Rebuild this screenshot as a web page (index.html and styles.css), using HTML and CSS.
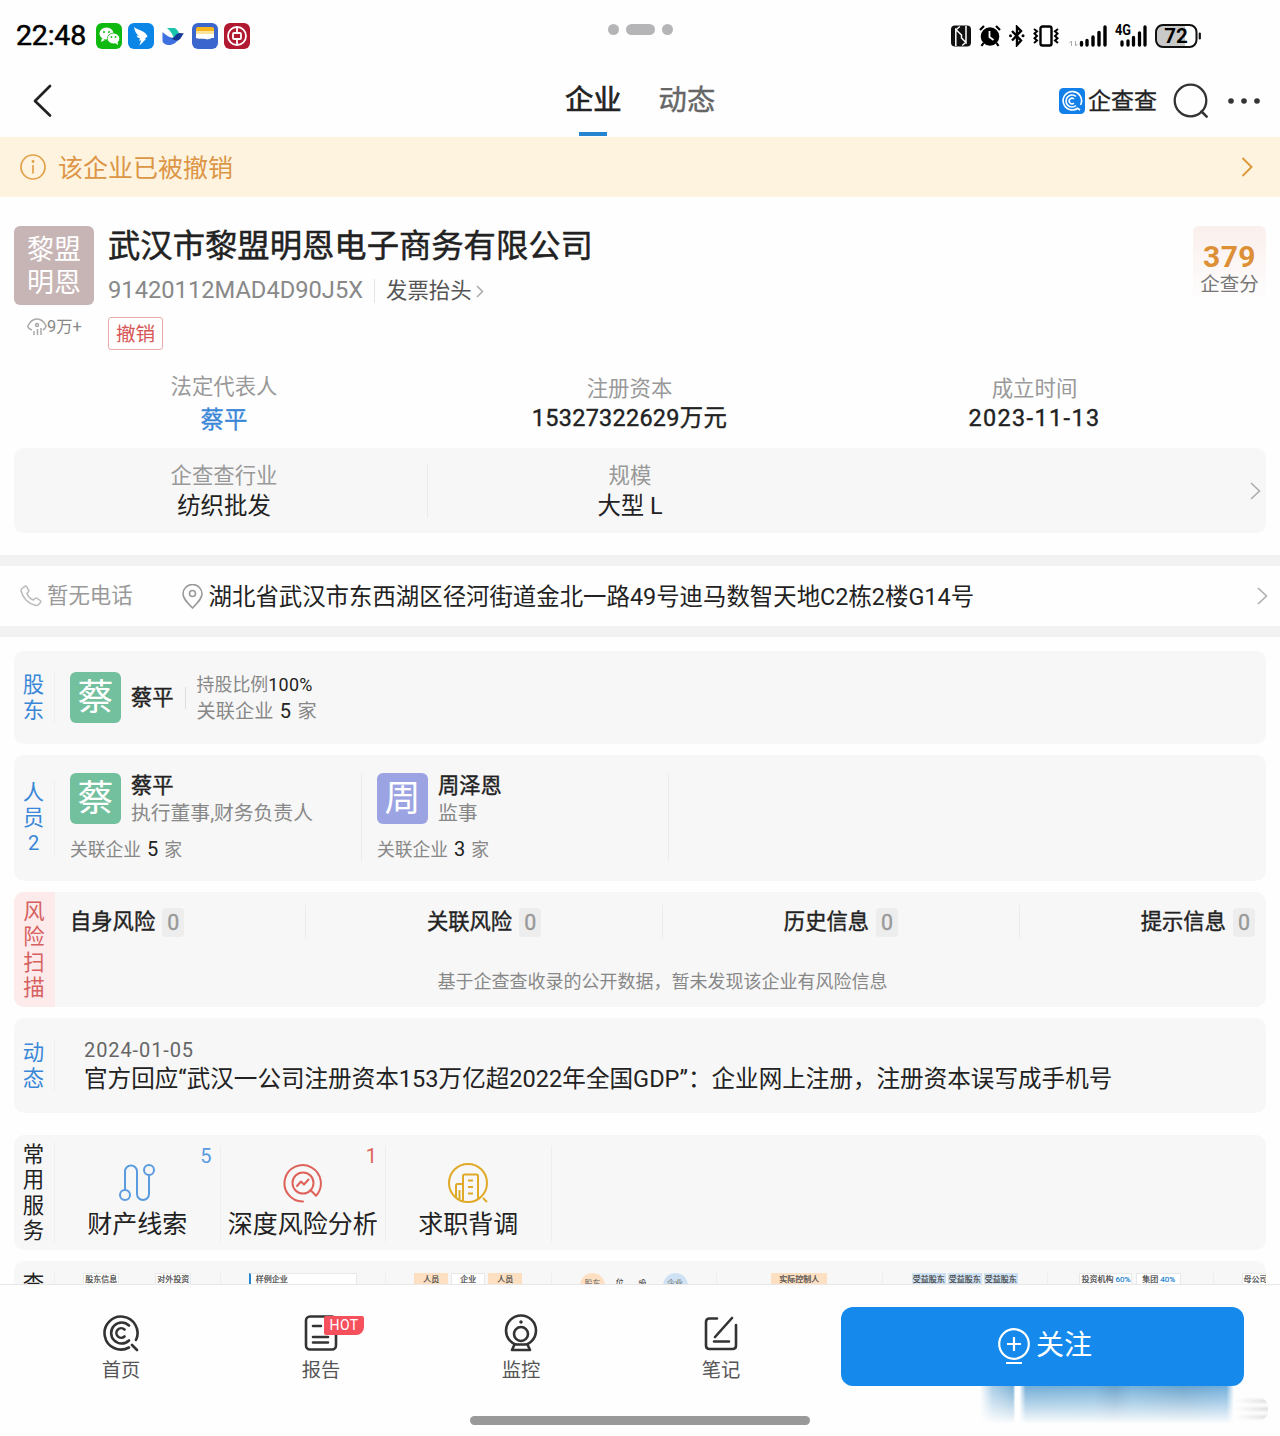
FILE: index.html
```html
<!DOCTYPE html>
<html lang="zh-CN">
<head>
  <meta charset="UTF-8" />
  <title>企查查 - 武汉市黎盟明恩电子商务有限公司</title>
  <link rel="stylesheet" href="styles.css">
</head>
<body>
  <div class="statusbar">
    <div class="status-left">
      <span class="time">22:48</span>
      <svg class="app-icon" viewBox="0 0 26 26"><rect width="26" height="26" rx="6" fill="#0fb90f"/><ellipse cx="10.500" cy="10.500" rx="7" ry="6" fill="#fff"/><path d="M6 15l-1 4 4-2z" fill="#fff"/><ellipse cx="17.500" cy="15.500" rx="6.200" ry="5.400" fill="#fff" stroke="#0fb90f" stroke-width=".8"/><path d="M19 20l3 2-.5-4z" fill="#fff"/><g fill="#0fb90f"><circle cx="8" cy="9" r="1"/><circle cx="13" cy="9" r="1"/><circle cx="15.500" cy="14" r=".9"/><circle cx="19.500" cy="14" r=".9"/></g></svg>
      <svg class="app-icon" viewBox="0 0 26 26"><rect width="26" height="26" rx="6" fill="#0b86e6"/><path d="M6 4c3 3 12 4 13.500 9.500L16.500 16h1.500l-6.500 6.500 1.500-5h-2l1.200-2c-2-.5-3.200-1.500-3.700-3l2.500.3C8 11 6.500 7.500 6 4z" fill="#fff"/></svg>
      <svg class="app-icon" viewBox="0 0 26 26"><path d="M7 5h8c2.500 2 4 4 4 6l-5 5c-1-4-3-8-7-11z" fill="#19c6ad"/><path d="M2.500 9C7 13 11 16 19 14.500 17 20 13 22 9 22c-3 0-6-1.500-6.500-4z" fill="#3f70e0"/><path d="M11.500 15.500c3.500-.5 4-5.500 8.500-5.500l4 .6c-2.500 2-2.500 5.500-6 7-2.500 0-4.500-.6-6.500-2.100z" fill="#143a95"/></svg>
      <svg class="app-icon" viewBox="0 0 26 26"><rect width="26" height="26" rx="6" fill="#3a66cd"/><path d="M4 6q0-2 2-2h14q2 0 2 2v6H4z" fill="#f9b51d"/><path d="M4 8h18v7c-3-1-4 2-8 1-4-1-6 0-10-1z" fill="#fde39a"/><path d="M4 11h18v4c-3-1-4 2-8 1-4-1-6 0-10-1z" fill="#fff"/></svg>
      <svg class="app-icon" viewBox="0 0 26 26"><rect width="26" height="26" rx="6" fill="#b01930"/><g fill="none" stroke="#fff" stroke-width="1.800"><circle cx="13" cy="13" r="9"/><rect x="9" y="10" width="8" height="6" rx="1"/><path d="M13 4v6M13 16v6"/></g></svg>
    </div>
    <div class="window-dots"><i></i><i class="pill"></i><i></i></div>
    <div class="status-right">
      <svg width="20" height="22" viewBox="0 0 20 22"><rect y=".5" width="20" height="21" rx="4" fill="#111"/><path d="M4.800 21V4.500l5.700 5.500v3l4.500 4.500V1M4.800 5l4-3.500M15.200 17l-4 3.500" fill="none" stroke="#fff" stroke-width="1.500"/></svg>
      <svg width="22" height="22" viewBox="0 0 22 22"><circle cx="11" cy="11.500" r="9.300" fill="#000"/><path d="M1 5l4-4M21 5l-4-4M4.500 18l-2 3M17.500 18l2 3" stroke="#000" stroke-width="2.200"/><path d="M10.500 6v6l4 3" fill="none" stroke="#fff" stroke-width="1.800"/></svg>
      <svg width="16" height="22" viewBox="0 0 16 22"><path d="M3 6l9 9.500L8 20V2l4 4-9 9.500" fill="none" stroke="#000" stroke-width="2.400"/><circle cx="1.500" cy="10.800" r="1.500"/><circle cx="14" cy="10.800" r="1.500"/></svg>
      <svg width="26" height="22" viewBox="0 0 26 22"><rect x="7.500" y="1.500" width="11" height="19" rx="2" fill="none" stroke="#000" stroke-width="2.400"/><path d="M1 4l3 2.300-2.500 2.300L4 11l-2.500 2.300L4 15.500 1 18M25 4l-3 2.300 2.500 2.300L22 11l2.500 2.300-2.500 2.200L25 18" fill="none" stroke="#000" stroke-width="2"/></svg>
      <svg class="signal" width="38" height="22" viewBox="0 0 38 22"><path d="M2.500 21v-5l-2 2M6.500 16v5l2-2" fill="none" stroke="#aaa"/><path d="M12.500 17.500v2.500M18 15.500v4.500M24 12v8M30 7.500v12.500M36 2v18" stroke="#000" stroke-width="3.400" stroke-linecap="round"/></svg>
      <svg width="32" height="24" viewBox="0 0 32 24"><text class="net" x="0" y="11" textLength="16" lengthAdjust="spacingAndGlyphs">4G</text><path d="M7 18v3M13 17v4M18.500 13.500v7.500M24.500 9v12M30 3v18" stroke="#000" stroke-width="3.300" stroke-linecap="round"/></svg>
      <svg width="47" height="24" viewBox="0 0 47 24"><rect x="1" y="1" width="40.500" height="22" rx="7" fill="#fff"/><path d="M8 1h22v22H8a7 7 0 0 1-7-7V8a7 7 0 0 1 7-7z" fill="#c9c9c9"/><rect x="1" y="1" width="40.500" height="22" rx="7" fill="none" stroke="#111" stroke-width="2"/><path d="M44.800 9.500v5" stroke="#111" stroke-width="2.200" stroke-linecap="round"/><text class="battery" x="21" y="19">72</text></svg>
    </div>
  </div>

  <div class="navbar">
    <svg class="back" width="20" height="34" viewBox="0 0 20 34"><path d="M18 2L3 17l15 14.500" fill="none" stroke="#222" stroke-width="2.700" stroke-linecap="round" stroke-linejoin="round"/></svg>
    <div class="tabs">
      <a class="tab active">企业</a>
      <a class="tab">动态</a>
    </div>
    <div class="nav-right">
      <svg width="26" height="26" viewBox="0 0 26 26"><rect width="26" height="26" rx="4.500" fill="#1280e8"/><g fill="none" stroke="#fff" stroke-width="1.600"><path d="M19 20a9.200 9.200 0 1 1 2.500-3M18 20l3 2"/><path d="M17 8.500a6 6 0 1 0 0 9"/><path d="M15 11a2.800 2.800 0 1 0 0 4"/></g></svg>
      <span class="brand">企查查</span>
      <svg class="search" width="36" height="36" viewBox="0 0 36 36"><circle cx="17.500" cy="17.500" r="15.800" fill="none" stroke="#333" stroke-width="2.300"/><path d="M28.500 28.500l5.200 5.200" stroke="#333" stroke-width="2.500" stroke-linecap="round"/></svg>
      <svg width="32" height="6" viewBox="0 0 32 6" fill="#333"><circle cx="3" cy="3" r="2.800"/><circle cx="16" cy="3" r="2.800"/><circle cx="29" cy="3" r="2.800"/></svg>
    </div>
  </div>

  <div class="notice">
    <svg width="26" height="26" viewBox="0 0 26 26"><circle cx="13" cy="13" r="12" fill="none" stroke="#e2a048" stroke-width="1.700"/><circle cx="13" cy="7.500" r="1.400" fill="#e2a048"/><path d="M13 11v8.500" stroke="#e2a048" stroke-width="1.700"/></svg>
    <span class="notice-text">该企业已被撤销</span>
    <svg width="12" height="20" viewBox="0 0 12 20"><path d="M1.500 1l9 9-9 9" fill="none" stroke="#dd9838" stroke-width="1.900"/></svg>
  </div>

  <main>
    <section class="company">
      <div class="logo-col">
        <div class="company-logo">黎盟<br>明恩</div>
        <div class="views">
          <svg width="20" height="18" viewBox="0 0 20 18" fill="none" stroke="#aaa" stroke-width="1.500"><path d="M5 12C2 11 .8 9 .8 8 3 3.500 6 1 10 1s7 2.500 9.200 7c-.5 1.500-1.500 3-3.200 4M7 13v4M10.500 11v6M14 10v7"/><circle cx="10" cy="7" r="1.500"/></svg>
          <span>9万+</span>
        </div>
      </div>
      <div class="company-info">
        <h1>武汉市黎盟明恩电子商务有限公司</h1>
        <div class="code-row">
          <span class="code">91420112MAD4D90J5X</span>
          <span class="invoice">发票抬头</span>
          <svg width="8" height="13" viewBox="0 0 8 13"><path d="M1 1l5.500 5.500L1 12" fill="none" stroke="#aaa" stroke-width="1.500"/></svg>
        </div>
        <span class="tag">撤销</span>
      </div>
      <div class="score"><b>379</b><span>企查分</span></div>
    </section>

    <section class="facts">
      <div class="fact first"><span>法定代表人</span><a>蔡平</a></div>
      <div class="fact"><span>注册资本</span><strong>15327322629万元</strong></div>
      <div class="fact"><span>成立时间</span><strong class="date">2023-11-13</strong></div>
    </section>

    <section class="industry">
      <div class="fact"><span>企查查行业</span><p>纺织批发</p></div>
      <div class="fact line"><span>规模</span><p>大型 L</p></div>
      <svg class="chevron" width="11" height="18" viewBox="0 0 11 18"><path d="M1 1l8.500 8L1 17" fill="none" stroke="#aaa" stroke-width="1.500"/></svg>
    </section>

    <section class="contact">
      <svg width="22" height="22" viewBox="0 0 22 22"><path d="M2 3.500L5 1.200q1-.5 1.700.5l2 3.600q.3 1-.5 1.700L7 8.500c1 3 3.500 5.500 6.500 6.500l1.500-1.500q.8-.8 1.700-.3l3.600 2.300q1 .7.300 1.700l-2.300 2.600q-1 1-3 .5C8 18.500 2.500 12.500 1.200 6q-.3-1.500.8-2.500z" fill="none" stroke="#bbb" stroke-width="1.500"/></svg>
      <span class="phone">暂无电话</span>
      <svg width="21" height="25" viewBox="0 0 21 25" fill="none" stroke="#999" stroke-width="1.600"><path d="M10.500 24C4 17.500 1 14 1 10a9.500 9.500 0 0 1 19 0c0 4-3 7.500-9.500 14z"/><circle cx="10.500" cy="9.500" r="3"/></svg>
      <span class="address">湖北省武汉市东西湖区径河街道金北一路49号迪马数智天地C2栋2楼G14号</span>
      <svg width="11" height="18" viewBox="0 0 11 18"><path d="M1 1l8.500 8L1 17" fill="none" stroke="#aaa" stroke-width="1.500"/></svg>
    </section>

    <section class="card holders">
      <div class="side">股<br>东</div>
      <div class="avatar green">蔡</div>
      <strong class="holder-name">蔡平</strong>
      <div class="holder-detail">
        <p>持股比例<em>100%</em></p>
        <p class="related">关联企业 <em>5</em> 家</p>
      </div>
    </section>

    <section class="card people">
      <div class="side">人<br>员<br><small>2</small></div>
      <div class="person">
        <div class="person-top">
          <div class="avatar green">蔡</div>
          <div><strong>蔡平</strong><span>执行董事,财务负责人</span></div>
        </div>
        <p>关联企业 <em>5</em> 家</p>
      </div>
      <div class="person">
        <div class="person-top">
          <div class="avatar purple">周</div>
          <div><strong>周泽恩</strong><span>监事</span></div>
        </div>
        <p>关联企业 <em>3</em> 家</p>
      </div>
    </section>

    <section class="card risk">
      <div class="side">风<br>险<br>扫<br>描</div>
      <div class="risk-body">
        <div class="risk-row">
          <div class="risk-item">自身风险<b>0</b></div>
          <i></i>
          <div class="risk-item">关联风险<b>0</b></div>
          <i></i>
          <div class="risk-item">历史信息<b>0</b></div>
          <i></i>
          <div class="risk-item">提示信息<b>0</b></div>
        </div>
        <p>基于企查查收录的公开数据，暂未发现该企业有风险信息</p>
      </div>
    </section>

    <section class="card news">
      <div class="side">动<br>态</div>
      <div class="news-body">
        <time>2024-01-05</time>
        <p>官方回应“武汉一公司注册资本153万亿超2022年全国GDP”：企业网上注册，注册资本误写成手机号</p>
      </div>
    </section>

    <section class="card services">
      <div class="side dark">常<br>用<br>服<br>务</div>
      <div class="service">
        <span class="count blue">5</span>
        <svg width="42" height="42" viewBox="0 0 42 42" fill="none" stroke="#5a9be0" stroke-width="2"><circle cx="9" cy="33" r="5"/><circle cx="33" cy="8" r="5"/><path d="M9 28V9.500a6 6 0 0 1 12 0V32a6 6 0 0 0 12 0V13"/></svg>
        <span>财产线索</span>
      </div>
      <div class="service">
        <span class="count red">1</span>
        <svg width="42" height="42" viewBox="0 0 42 42" fill="none" stroke="#de6259" stroke-width="2" stroke-linecap="round" stroke-linejoin="round"><path d="M21 39.500a18.200 18.200 0 1 1 13-5.800L28.500 28"/><circle cx="21" cy="21" r="10.500"/><path d="M15 24l4-4.500 3 3 4.500-5"/></svg>
        <span>深度风险分析</span>
      </div>
      <div class="service">
        <svg width="42" height="42" viewBox="0 0 42 42" fill="none" stroke="#e0aa28" stroke-width="2" stroke-linejoin="round"><circle cx="21" cy="21" r="19"/><path d="M16 39V14q0-1.500 1.500-1.500h12q1.500 0 1.500 1.500v23M9 35V23.500q0-1.500 1.500-1.500H16M21 18.500h5M21 25h5M21 31.500h5M12.500 28v9M36 36l4 4"/></svg>
        <span>求职背调</span>
      </div>
    </section>

    <section class="card charts">
      <div class="side dark">查</div>
      <div class="chart gap-wide"><span class="node">股东信息</span><span class="node">对外投资</span></div>
      <div class="chart"><span class="node example">样例企业</span></div>
      <div class="chart"><span class="node orange">人员</span><span class="node wide">企业</span><span class="node orange">人员</span></div>
      <div class="chart circles"><span class="ball peach">股东</span><span class="tilt">位...</span><span class="tilt left">...股</span><span class="ball sky">企业</span></div>
      <div class="chart"><span class="node orange controller">实际控制人</span></div>
      <div class="chart tight"><span class="node sky">受益股东</span><span class="node sky">受益股东</span><span class="node sky">受益股东</span></div>
      <div class="chart"><span class="node">投资机构 <em>60%</em></span><span class="node pad">集团 <em>40%</em></span></div>
      <div class="chart last"><span class="node">母公司</span></div>
    </section>
  </main>

  <footer>
    <a class="foot-item">
      <svg width="38" height="38" viewBox="0 0 38 38" fill="none" stroke="#333" stroke-width="2.600" stroke-linecap="round"><path d="M27 33.500a16.500 16.500 0 1 1 7-7.500M30 31l5 5"/><path d="M27 11.500a10.500 10.500 0 1 0 0 15"/><path d="M22.500 15.500a4.800 4.800 0 1 0 0 7"/></svg>
      <span>首页</span>
    </a>
    <a class="foot-item">
      <svg width="38" height="38" viewBox="0 0 38 38" fill="none" stroke="#333" stroke-width="2.600" stroke-linecap="round"><rect x="4" y="2.500" width="30" height="33" rx="4"/><path d="M11 12h8M11 23h15M11 28.500h15"/></svg>
      <b class="hot">HOT</b>
      <span>报告</span>
    </a>
    <a class="foot-item">
      <svg width="38" height="38" viewBox="0 0 38 38" fill="none" stroke="#333" stroke-width="2.600" stroke-linejoin="round"><circle cx="19" cy="16.500" r="15"/><circle cx="19" cy="20" r="7"/><circle cx="19" cy="8" r="1" fill="#333" stroke-width="1.500"/><path d="M12.500 30.500L10 36h18l-2.500-5.500z" fill="#fff"/></svg>
      <span>监控</span>
    </a>
    <a class="foot-item">
      <svg width="38" height="38" viewBox="0 0 38 38" fill="none" stroke="#333" stroke-width="2.600" stroke-linecap="round"><path d="M15 4.500H7.500Q4 4.500 4 8v23.500Q4 35 7.500 35h23q3.500 0 3.500-3.500V11M30 4L13 23M12 27.500h15"/></svg>
      <span>笔记</span>
    </a>
    <button class="follow-btn">
      <svg width="34" height="38" viewBox="0 0 34 38" fill="none" stroke="#fff" stroke-width="2.200"><circle cx="17" cy="17" r="14.800"/><path d="M17 10v14M10 17h14M9 36h16"/></svg>
      <span>关注</span>
    </button>
    <div class="smear"></div>
    <div class="smear-end"></div>
    <div class="home-bar"></div>
  </footer>
</body>
</html>
```
FILE: styles.css
```css
* {
    box-sizing: border-box;
}

body {
    margin: 0;
    width: 1280px;
    height: 1436px;
    overflow: hidden;
    display: flex;
    flex-direction: column;
    background-color: #fefefe;
    color: #222;
    font-family: Roboto, "Noto Sans CJK SC", sans-serif;
    line-height: 1;
    white-space: nowrap;
}

p, h1 {
    margin: 0;
    font-weight: normal;
}

em {
    font-style: normal;
    color: #222;
}

svg {
    display: block;
    flex-shrink: 0;
}

strong {
    font-weight: normal;
    -webkit-text-stroke: 0.4px currentColor;
}

/* status bar */
.statusbar {
    display: grid;
    grid-template-columns: 596px 1fr 596px;
    height: 72px;
    flex-shrink: 0;
    padding-top: 22px;
}

.status-left {
    display: flex;
    align-items: center;
    height: 28px;
    padding-left: 16px;
}

.time {
    width: 80px;
    padding-top: 1px;
    font-size: 28.500px;
    letter-spacing: -0.200px;
    color: #000;
    -webkit-text-stroke: 0.5px currentColor;
}

.app-icon {
    width: 26px;
    height: 26px;
    margin-right: 6px;
}

.window-dots {
    display: flex;
    align-items: center;
    justify-content: center;
    gap: 7px;
    height: 14px;
}

.window-dots i {
    width: 11px;
    height: 11px;
    border-radius: 6px;
    background-color: #b5b5b8;
}

.window-dots .pill {
    width: 29px;
}

.status-right {
    display: flex;
    align-items: center;
    justify-content: flex-end;
    gap: 8px;
    height: 28px;
    padding-right: 78px;
}

.signal {
    margin-left: 2px;
}

.net {
    font-size: 14px;
    font-weight: bold;
}

.battery {
    font-size: 20.500px;
    font-weight: bold;
    text-anchor: middle;
}

/* nav */
.navbar {
    display: grid;
    grid-template-columns: 540px 200px 540px;
    height: 64.500px;
    flex-shrink: 0;
}

.back {
    margin: 12px 0 0 32px;
}

.tabs {
    display: flex;
    gap: 37px;
    padding-left: 25px;
}

.tab {
    height: 64px;
    padding-top: 15px;
    font-size: 28.300px;
    color: #666;
    -webkit-text-stroke: 0.4px currentColor;
}

.tab.active {
    color: #222;
    -webkit-text-stroke: 0.7px currentColor;
}

.tab.active::after {
    content: "";
    display: block;
    width: 28px;
    height: 4px;
    margin: 17px auto 0;
    background-color: #2585d0;
}

.nav-right {
    display: flex;
    align-items: center;
    justify-content: flex-end;
    height: 57px;
    padding-right: 20px;
}

.brand {
    margin: 1px 16px 0 3px;
    font-size: 23px;
    -webkit-text-stroke: 0.3px currentColor;
}

.search {
    margin-right: 19px;
}

/* notice */
.notice {
    display: flex;
    align-items: center;
    height: 60.500px;
    flex-shrink: 0;
    padding: 0 27px 0 20px;
    background-color: #fef3df;
}

.notice-text {
    flex: 1;
    margin: 3px 0 0 12px;
    font-size: 25px;
    color: #dc9646;
}

main {
    height: 1087px;
    overflow: hidden;
    padding-top: 29px;
}

/* company header */
.company {
    display: flex;
    height: 133px;
    padding: 0 14px;
}

.logo-col {
    width: 80px;
    margin-right: 14px;
}

.company-logo {
    height: 79px;
    padding-top: 8px;
    border-radius: 6px;
    background-color: #c7b5b5;
    color: #fff;
    text-align: center;
    font-size: 27px;
    line-height: 33px;
}

.views {
    display: flex;
    align-items: center;
    margin: 13px 0 0 13px;
    color: #888;
    font-size: 16.400px;
}

.company-info {
    flex: 1;
}

.company-info h1 {
    padding-top: 1px;
    font-size: 32.350px;
    line-height: 38px;
    -webkit-text-stroke: 0.5px currentColor;
}

.code-row {
    display: flex;
    align-items: center;
    height: 26px;
    margin-top: 13px;
    margin-bottom: 13px;
}

.code {
    width: 267px;
    margin-right: 11px;
    border-right: 1px solid #e5e5e5;
    font-size: 23.700px;
    color: #888;
}

.invoice {
    margin-right: 4px;
    font-size: 21.400px;
    color: #555;
}

.tag {
    display: inline-block;
    height: 33px;
    padding: 7px 7px 5px;
    border: 1px solid #ecaaaa;
    border-radius: 3px;
    font-size: 19.600px;
    color: #d75656;
}

.score {
    display: flex;
    flex-direction: column;
    align-items: center;
    width: 73px;
    height: 75px;
    padding-top: 16px;
    border-radius: 6px;
    background: linear-gradient(#faefec, #fefefe);
}

.score b {
    font-size: 30px;
    color: #dd8f36;
    letter-spacing: 0.500px;
}

.score span {
    margin-top: 3px;
    font-size: 19.500px;
    color: #777;
}

/* facts */
.facts, .industry {
    display: grid;
    grid-template-columns: 406px 405px 405px;
    margin: 0 14px;
    padding-left: 7px;
}

.facts {
    height: 89px;
    padding-top: 17px;
}

.fact {
    text-align: center;
}

.fact span {
    display: block;
    margin-bottom: 9px;
    font-size: 21.400px;
    line-height: 22px;
    color: #999;
}

.fact a, .fact p, .fact strong {
    display: block;
    font-size: 23.400px;
    line-height: 24px;
}

.fact strong {
    letter-spacing: 0.300px;
}

.facts .fact {
    padding-top: 2px;
}

.facts .fact span {
    margin-bottom: 6px;
}

.facts .first {
    padding-top: 0;
}

.facts .first span {
    margin-bottom: 10px;
}

.fact a {
    color: #3a87d8;
    -webkit-text-stroke: 0.3px currentColor;
}

.fact .date {
    letter-spacing: 1.400px;
}

.industry {
    grid-template-columns: 406px 405px 1fr;
    align-items: center;
    height: 85px;
    padding-right: 5px;
    border-radius: 10px;
    background-color: #f7f7f7;
}

.industry .fact {
    height: 54px;
    padding-top: 1px;
}

.industry .fact span {
    margin-bottom: 7px;
}

.line {
    border-left: 1px solid #ebebeb;
}

.chevron {
    justify-self: end;
}

/* contact */
.contact {
    display: flex;
    align-items: center;
    height: 82px;
    margin-top: 22px;
    margin-bottom: 14px;
    padding: 0 12px 0 20px;
    border-top: 11px solid #f2f2f2;
    border-bottom: 11px solid #f2f2f2;
}

.phone {
    margin: 0 49px 0 5px;
    font-size: 21.400px;
    color: #999;
}

.address {
    flex: 1;
    margin: 3px 0 0 6px;
    font-size: 23.420px;
}

/* cards */
.card {
    display: flex;
    margin: 0 14px 11px;
    border-radius: 10px;
    background-color: #f7f7f7;
    overflow: hidden;
}

.side {
    display: flex;
    flex-direction: column;
    justify-content: center;
    align-self: center;
    width: 41px;
    margin-right: 15px;
    padding-right: 1px;
    border-right: 1px solid #efefef;
    text-align: center;
    font-size: 21.400px;
    line-height: 25.300px;
    color: #3a87d8;
    flex-shrink: 0;
}

.side small {
    font-size: 20px;
}

.dark {
    color: #222;
}

.avatar {
    width: 51px;
    height: 51px;
    border-radius: 6px;
    color: #fff;
    font-size: 36px;
    line-height: 52px;
    text-align: center;
    flex-shrink: 0;
}

.green {
    background-color: #73c09e;
}

.purple {
    background-color: #9ba3e2;
}

.holders {
    align-items: center;
    height: 93px;
}

.holder-name {
    margin: 0 11px 0 10px;
    font-size: 21.300px;
}

.holder-detail {
    position: relative;
    padding: 1px 0 0 12px;
    font-size: 17.900px;
    line-height: 26px;
    color: #888;
}

.holder-detail em {
    letter-spacing: 0.300px;
}

.holder-detail::before {
    content: "";
    position: absolute;
    left: 0;
    top: 16px;
    width: 1px;
    height: 22px;
    background-color: #ddd;
}

.holder-detail .related {
    font-size: 19.200px;
    word-spacing: 1.500px;
}

.people {
    height: 126px;
}

.person {
    width: 292px;
    height: 88px;
    margin: 18px 15px 0 0;
    border-right: 1px solid #ececec;
}

.person-top {
    display: flex;
    gap: 10px;
}

.person-top strong, .person-top span {
    display: block;
    font-size: 21.300px;
    line-height: 26px;
}

.person-top span {
    margin-top: 2px;
    font-size: 19.800px;
    color: #888;
}

.person p {
    margin-top: 12px;
    font-size: 17.800px;
    line-height: 20px;
    word-spacing: 1.500px;
    color: #888;
}

.person em, .related em {
    font-size: 20px;
}

.risk {
    height: 115px;
}

.risk .side {
    align-self: stretch;
    border: none;
    background-color: #fdeaea;
    color: #d65f5f;
}

.risk-body {
    flex: 1;
    padding: 13px 11px 0 0;
}

.risk-row {
    display: flex;
    justify-content: space-between;
    align-items: center;
    height: 34px;
}

.risk-row i {
    width: 1px;
    height: 34px;
    background-color: #ececec;
}

.risk-item {
    display: flex;
    align-items: center;
    font-size: 21.300px;
    -webkit-text-stroke: 0.4px currentColor;
}

.risk-item b {
    width: 22px;
    margin-left: 7px;
    border-radius: 4px;
    background-color: #ededed;
    color: #999;
    font-weight: normal;
    line-height: 29px;
    text-align: center;
}

.risk-body p {
    margin-top: 34px;
    text-align: center;
    font-size: 18px;
    color: #888;
}

.news {
    height: 95px;
    margin-bottom: 22px;
}

.news-body {
    padding: 22px 0 0 14px;
}

.news-body time {
    display: block;
    font-size: 20px;
    letter-spacing: 0.900px;
    color: #666;
}

.news-body p {
    margin-top: 8px;
    font-size: 23.580px;
}

.services {
    height: 115px;
}

.services .side {
    margin-right: 0;
}

.service {
    position: relative;
    display: flex;
    flex-direction: column;
    align-items: center;
    width: 165.500px;
    height: 96px;
    margin-top: 11px;
    padding-top: 16px;
    border-right: 1px solid #eee;
    font-size: 25px;
}

.service svg {
    margin-bottom: 8px;
}

.count {
    position: absolute;
    right: 8px;
    top: 0;
    font-size: 20px;
}

.blue {
    color: #5a9be0;
}

.red {
    color: #de6259;
}

.charts {
    height: 115px;
}

.charts .side {
    align-self: flex-start;
    height: 90px;
    margin: 10px 0 0;
    justify-content: flex-start;
}

.chart {
    display: flex;
    justify-content: center;
    gap: 3px;
    width: 165.500px;
    height: 90px;
    margin-top: 12px;
    border-right: 1px solid #eee;
    flex-shrink: 0;
}

.node {
    height: 16px;
    padding: 2px 1px;
    border: 1px solid #e8e8e8;
    background-color: #fff;
    font-size: 8px;
    line-height: 8px;
    color: #444;
    -webkit-text-stroke: 0.2px currentColor;
}

.node em {
    color: #2585d0;
}

.gap-wide {
    gap: 36px;
}

.example {
    width: 108px;
    padding-left: 5px;
    border-left: 2px solid #2585d0;
}

.orange {
    padding: 2px 8px;
    border-color: #fde0c2;
    background-color: #fde0c2;
}

.wide {
    padding: 2px 8px;
}

.controller {
    padding: 2px 7px;
}

.tight {
    gap: 2px;
}

.node.sky {
    border-color: #cfe2f3;
    background-color: #cfe2f3;
    padding: 2px 0;
}

.pad {
    margin-left: 1px;
    padding: 2px 5px;
}

.ball {
    width: 25px;
    height: 25px;
    border-radius: 50%;
    text-align: center;
    font-size: 8px;
    line-height: 22px;
    color: #666;
}

.peach {
    background-color: #fde0c2;
}

.ball.sky {
    background-color: #cfe2f3;
}

.tilt {
    font-size: 8px;
    line-height: 20px;
    transform: rotate(12deg);
}

.tilt.left {
    margin-left: 20px;
    transform: rotate(-20deg);
}

.last {
    justify-content: flex-start;
    padding-left: 28px;
}

/* footer */
footer {
    position: relative;
    display: flex;
    height: 152px;
    flex-shrink: 0;
    padding-left: 21px;
    border-top: 1px solid #e8e8e8;
    background-color: #fefefe;
}

.foot-item {
    position: relative;
    display: flex;
    flex-direction: column;
    align-items: center;
    width: 200px;
    padding-top: 29px;
    font-size: 19.300px;
    color: #555;
}

.foot-item span {
    margin-top: 9px;
}

.hot {
    position: absolute;
    left: 103px;
    top: 31px;
    width: 40px;
    height: 19px;
    border-radius: 2px 2px 8px 2px;
    background-color: #f5505c;
    color: #fff;
    font-size: 14px;
    font-weight: normal;
    line-height: 19px;
    text-align: center;
    letter-spacing: 0.400px;
}

.follow-btn {
    display: flex;
    align-items: center;
    justify-content: center;
    gap: 5px;
    width: 403px;
    height: 79px;
    margin: 22px 0 0 20px;
    padding: 0 0 2px 4px;
    border: none;
    border-radius: 12px;
    background-color: #158aec;
    color: #fff;
    font-family: inherit;
    font-size: 28px;
    line-height: 1;
}

.smear {
    position: absolute;
    left: 980px;
    top: 101px;
    width: 254px;
    height: 37px;
    background:
        linear-gradient(rgba(254,254,254,0.05), rgba(254,254,254,0.45) 45%, rgba(254,254,254,0.97)),
        linear-gradient(90deg, #fefefe, #a5cbe5 5%, #85b6d8 11%, #74acd4 13%, #fff 14%, #fff 15.500%, #6ca9d4 18%, #70aed8 45%, #629dc6 53%, #70aed8 60%, #639fca 80%, #6aaada 97%, #fefefe);
}

.smear-end {
    position: absolute;
    left: 1234px;
    top: 112px;
    width: 34px;
    height: 24px;
    border-radius: 0 10px 10px 0;
    background:
        linear-gradient(90deg, #fefefe, rgba(254,254,254,0)),
        repeating-linear-gradient(#fefefe, #dedede 4px, #fefefe 8px);
}

.home-bar {
    position: absolute;
    left: 470px;
    top: 131px;
    width: 340px;
    height: 9px;
    border-radius: 5px;
    background-color: #999;
}
```
